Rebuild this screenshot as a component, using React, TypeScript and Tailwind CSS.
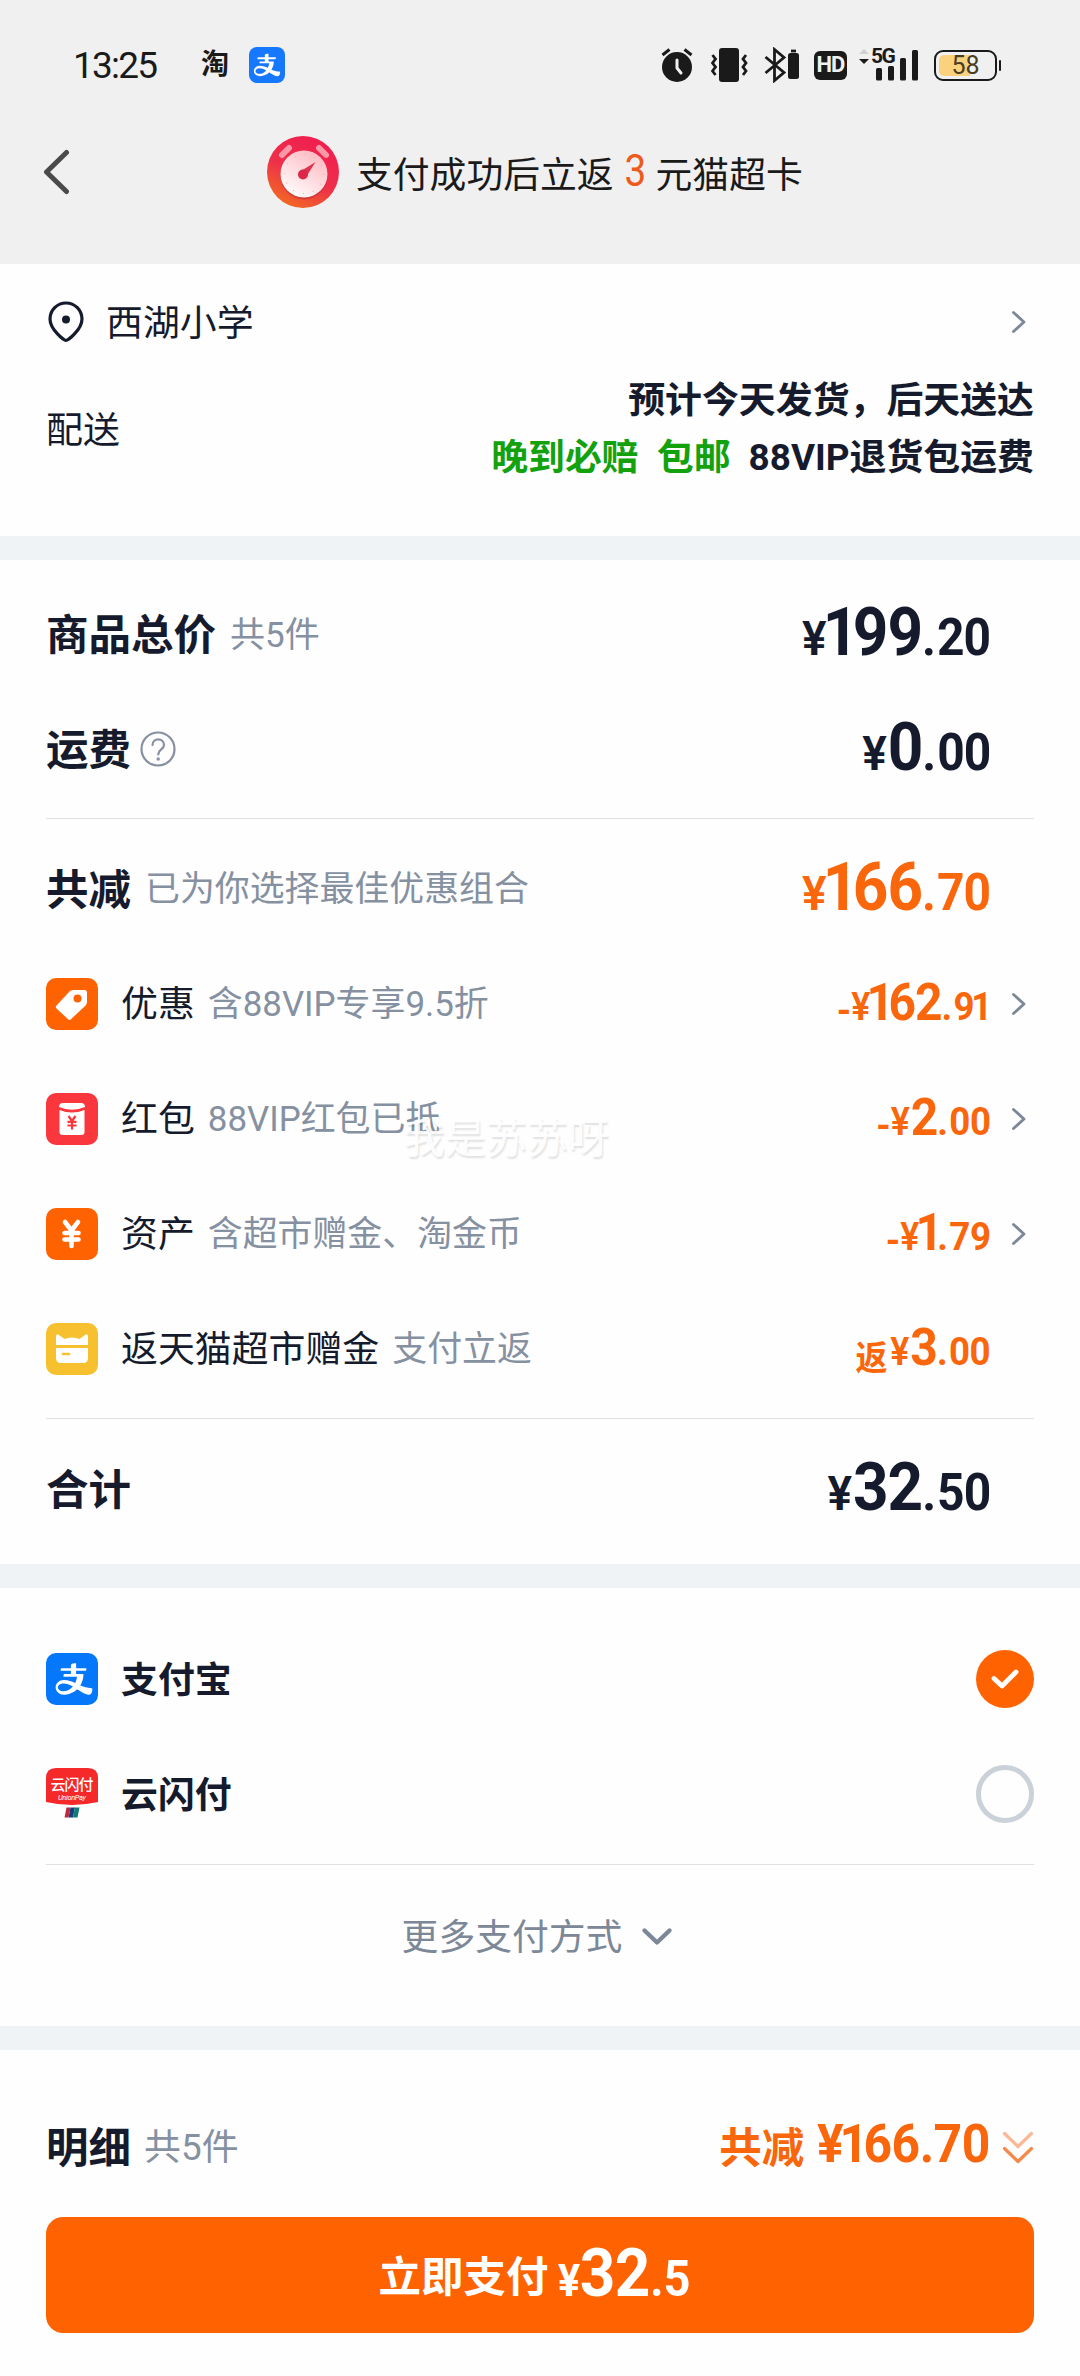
import type { ReactNode } from "react";
import clsx from "clsx";
import { AiOutlineAlipay } from "react-icons/ai";

type PriceProps = {
  prefix?: string;
  int: string;
  dec: string;
  size?: "lg" | "sm";
  className?: string;
};

// A leading "1" is set tighter than the other digits
function Digits({ value, tight }: { value: string; tight: string }) {
  if (!value.startsWith("1")) return <>{value}</>;
  return (
    <>
      <span className={tight}>1</span>
      {value.slice(1)}
    </>
  );
}

function Price({ prefix, int, dec, size = "lg", className }: PriceProps) {
  const lg = size === "lg";
  return (
    <span
      className={clsx(
        "flex origin-right scale-x-[0.94] items-baseline font-bold leading-none whitespace-nowrap",
        lg ? "pb-[2px]" : "pb-[3px]",
        className,
      )}
    >
      {prefix === "-" && <span className="relative top-[4px] mr-[2px] text-[39px] tracking-[-2px]">-</span>}
      {prefix && prefix !== "-" && (
        <span className="relative top-[5px] mr-[3px] text-[34px]">{prefix}</span>
      )}
      <span className={lg ? "mr-[4px] text-[49px] font-semibold tracking-[-3px]" : "mr-[3px] text-[38px] font-semibold tracking-[-2px]"}>¥</span>
      <span className={lg ? "text-[66px] tracking-[-1px]" : "text-[51px] tracking-[-1px]"}>
        <Digits value={int} tight={lg ? "-ml-[5px] tracking-[-6px]" : "-ml-[5px] tracking-[-6px]"} />
      </span>
      <span className={lg ? "text-[51px] tracking-[-1px]" : "text-[39px] tracking-[-0.5px]"}>
        <span className="mr-[2px]">.</span>
        {dec.endsWith("1") ? (
          <>
            {dec.slice(0, -1)}
            <span className="-ml-[3px] -mr-[2px]">1</span>
          </>
        ) : (
          dec
        )}
      </span>
    </span>
  );
}

function Chevron() {
  return (
    <svg className="w-[14px] h-[22px] shrink-0" viewBox="0 0 14 22" fill="none">
      <path d="M1.5 1.5 12 11 1.500 20.500" stroke="#7c8798" strokeWidth="2.8" strokeLinecap="round" strokeLinejoin="round" />
    </svg>
  );
}

function StatusBar() {
  return (
    <div className="flex h-[130px] items-center pl-[73px] text-[#1a1a1a]">
      <span className="w-[128px] pt-px text-[37px] leading-none tracking-[-1.8px]">13:25</span>
      <span className="w-[48px] text-[28px] font-bold leading-none">淘</span>
      <span className="flex h-9 w-9 items-center justify-center rounded-[8px] bg-[#1677ff]">
        <AiOutlineAlipay className="h-[30px] w-[30px] text-white" />
      </span>

      {/* Alarm */}
      <svg className="ml-[375px] h-[36px] w-[34px]" viewBox="0 0 34 36">
        <circle cx="17" cy="20" r="15" fill="currentColor" />
        <path d="m2.5 8 7-5.5M31.500 8l-7-5.500" stroke="currentColor" strokeWidth="3" />
        <path d="M17 13v8l4 5" fill="none" stroke="#f0f0f0" strokeWidth="3" strokeLinecap="round" strokeLinejoin="round" />
      </svg>
      {/* Vibrate */}
      <svg className="ml-[17px] h-[36px] w-[37px]" viewBox="0 0 37 36" fill="none" stroke="currentColor" strokeWidth="2.8">
        <rect x="8" y="1" width="20" height="34" rx="3" fill="currentColor" stroke="none" />
        <path d="m1.500 8 3 4-3 4 3 4-3 4 3 4M35 8l-3 4 3 4-3 4 3 4-3 4" />
      </svg>
      {/* Bluetooth with device battery */}
      <svg className="ml-[16px] h-[36px] w-[36px]" viewBox="0 0 36 36" fill="none" stroke="currentColor" strokeWidth="2.800">
        <path d="m1.500 10 18.500 15.500-9.500 8V2.500l9.500 8L1.500 26" />
        <rect x="24" y="6" width="11" height="26" rx="2.500" fill="currentColor" stroke="none" />
        <path d="M27 4h5" />
      </svg>
      <span className="ml-[14px] flex h-[29px] w-[33px] items-center justify-center rounded-[6px] bg-[#1a1a1a] text-[22px] font-bold leading-none tracking-[-1px] text-[#f0f0f0]">
        HD
      </span>
      {/* Signal */}
      <span className="relative ml-[11px] h-[36px] w-[61px]">
        <svg className="h-[36px] w-[61px]" viewBox="0 0 61 36" fill="currentColor">
          <path d="m1 7 5-5 5 5z" fill="#cfcfcf" />
          <path d="M1 12h10l-5 5z" />
          <rect x="18" y="21" width="6" height="12.500" rx="1.500" />
          <rect x="30" y="19" width="6" height="14.500" rx="1.500" />
          <rect x="42" y="11" width="6" height="22.500" rx="1.500" />
          <rect x="54" y="3" width="6" height="30.500" rx="1.500" />
        </svg>
        <span className="absolute left-[13px] top-[-3px] text-[21px] font-bold leading-[24px] tracking-[-1.5px]">5G</span>
      </span>
      {/* Battery */}
      <span className="relative ml-[15px] flex h-[31px] w-[63px] items-center justify-center rounded-[9px] border-2 border-[#1a1a1a]">
        <span className="absolute left-[3px] top-[3px] h-[21px] w-[31px] rounded-l-[5px] bg-[#fad27d]" />
        <span className="relative text-[25px] leading-none text-[#4a3d22]">58</span>
        <span className="absolute -right-[6px] top-[8px] h-[11px] w-[2.5px] rounded bg-[#1a1a1a]" />
      </span>
    </div>
  );
}

function TimerIcon() {
  return (
    <svg className="h-[72px] w-[72px]" viewBox="0 0 72 72">
      <defs>
        <linearGradient id="timer" x1="0.75" y1="0.1" x2="0.3" y2="1">
          <stop offset="0" stopColor="#f01f4e" />
          <stop offset="0.5" stopColor="#ee2f4a" />
          <stop offset="1" stopColor="#f26a22" />
        </linearGradient>
        <linearGradient id="dial" x1="0.8" y1="0.1" x2="0.2" y2="1">
          <stop offset="0" stopColor="#fdbcc4" />
          <stop offset="1" stopColor="#ffffff" />
        </linearGradient>
      </defs>
      <circle cx="36" cy="36" r="36" fill="url(#timer)" />
      <path d="m15 19 7-7M52 12l7 7" stroke="#fb97a6" strokeWidth="6" strokeLinecap="round" />
      <circle cx="37" cy="40" r="23.500" fill="#b52a32" opacity="0.5" />
      <circle cx="37" cy="38" r="23.500" fill="url(#dial)" />
      <circle cx="37" cy="38" r="19.500" fill="none" stroke="#eeb0a8" strokeWidth="1.200" strokeDasharray="1 9.210" />
      <path d="m34 35 14.500-9L39 41z" fill="#e2304d" />
      <circle cx="36" cy="38.500" r="5" fill="#dc2747" />
    </svg>
  );
}

function Header() {
  return (
    <header className="h-[264px] bg-[#f0f0f0]">
      <StatusBar />
      <div className="flex h-[84px] items-center pl-[43px]">
        <svg className="h-[46px] w-[27px]" viewBox="0 0 27 46" fill="none">
          <path d="M23.500 3.500 3.500 23l20 19.500" stroke="#4a4a4a" strokeWidth="5" strokeLinecap="round" strokeLinejoin="round" />
        </svg>
        <span className="ml-[197px]">
          <TimerIcon />
        </span>
        <p className="ml-[17px] flex items-baseline pt-[2px] text-[36.8px] leading-none text-[#1a1a1a]">
          支付成功后立返
          <span className="relative -top-[2px] mx-[9px] inline-block w-[24px] text-center text-[44px] leading-none text-[#ec5b1b]">
            <span className="inline-block scale-x-[0.88]">3</span>
          </span>
          元猫超卡
        </p>
      </div>
    </header>
  );
}

function TagIcon() {
  return (
    <svg viewBox="0 0 52 52" className="h-[52px] w-[52px]">
      <rect width="52" height="52" rx="10" fill="#ff6200" />
      <path d="M27 12h11.500q2.500 0 2.500 2.500V24q0 2-1.400 3.400L25 41.200q-1.500 1.500-3 0L10.500 30.500q-1.500-1.500 0-3L23.500 13.500Q25 12 27 12z" fill="#fff" />
      <circle cx="31.500" cy="20.500" r="4" fill="#ff6200" />
    </svg>
  );
}

function RedPacketIcon() {
  return (
    <svg viewBox="0 0 52 52" className="h-[52px] w-[52px]">
      <rect width="52" height="52" rx="10" fill="#fa373c" />
      <path d="M13 14q0-4 4-4h18q4 0 4 4-13 5.500-26 0z" fill="#fff" />
      <path d="M13.500 17q12.500 5 25 0v22q0 3-3 3h-19q-3 0-3-3z" fill="#fff" />
      <path d="m22.500 23 3.500 5 3.500-5M26 28v8.500M21.500 28.800h9M21.500 32.500h9" fill="none" stroke="#fa373c" strokeWidth="2.200" />
    </svg>
  );
}

function YuanIcon() {
  return (
    <svg viewBox="0 0 52 52" className="h-[52px] w-[52px]">
      <rect width="52" height="52" rx="10" fill="#ff6200" />
      <path d="m19 14 6.500 8.500L32 14M25.500 23v15M18.500 25h14M18.500 31.500h14" fill="none" stroke="#fff" strokeWidth="4.600" strokeLinecap="round" strokeLinejoin="round" />
    </svg>
  );
}

function CatCardIcon() {
  return (
    <svg viewBox="0 0 52 52" className="h-[52px] w-[52px]">
      <rect width="52" height="52" rx="10" fill="#f6c02f" />
      <path d="M10 22v-8q0-4 3-2l5.500 4q7.500-3 15 0l5.500-4q3-2 3 2v8z" fill="#fff" />
      <path d="M10 25h32v10q0 5-5 5H15q-5 0-5-5z" fill="#fff" />
      <path d="M17 31h6" stroke="#f6c02f" strokeWidth="2.600" strokeLinecap="round" />
    </svg>
  );
}

function UnionPayIcon() {
  return (
    <svg viewBox="0 0 52 52" className="h-[52px] w-[52px]">
      <path d="M0 10Q0 0 10 0h32q10 0 10 10v24Q26 40 0 34z" fill="#f5282a" />
      <text x="26" y="22" textAnchor="middle" fontSize="15" fontWeight="500" textLength="43" fill="#fff">云闪付</text>
      <text x="26" y="32" textAnchor="middle" fontSize="7.5" fontStyle="italic" textLength="28" fill="#fff">UnionPay</text>
      <path d="M20.500 39.500h4l-2 10h-4z" fill="#c2273a" />
      <path d="M24.500 39.500h4.500l-2 10h-4.500z" fill="#12407f" />
      <path d="M29 39.500h4.500l-2 10H27z" fill="#127a72" />
    </svg>
  );
}

function DiscountRow(props: {
  icon: ReactNode;
  label: string;
  note: string;
  prefix: string;
  int: string;
  dec: string;
  link?: boolean;
}) {
  return (
    <div className="flex h-[115px] items-center">
      {props.icon}
      <span className="ml-[23px] pt-[3px] text-[36.9px]">{props.label}</span>
      <span className="ml-[13px] pt-[3px] text-[34.9px] text-[#8590a1]">{props.note}</span>
      <Price prefix={props.prefix} int={props.int} dec={props.dec} size="sm" className="ml-auto text-[#f9660b]" />
      <span className="ml-[22px] w-[22px]">{props.link && <Chevron />}</span>
    </div>
  );
}

const DISCOUNTS = [
  { icon: <TagIcon />,       label: "优惠",           note: "含88VIP专享9.5折",     prefix: "-",  int: "162", dec: "91", link: true },
  { icon: <RedPacketIcon />, label: "红包",           note: "88VIP红包已抵",        prefix: "-",  int: "2",   dec: "00", link: true },
  { icon: <YuanIcon />,      label: "资产",           note: "含超市赠金、淘金币",   prefix: "-",  int: "1",   dec: "79", link: true },
  { icon: <CatCardIcon />,   label: "返天猫超市赠金", note: "支付立返",             prefix: "返", int: "3",   dec: "00" },
];

function SummaryRow({ title, children, int, dec, orange }: {
  title: string;
  children?: ReactNode;
  int: string;
  dec: string;
  orange?: boolean;
}) {
  return (
    <div className="flex h-[115px] items-center pr-[44px]">
      <span className="pt-[5px] text-[42.5px] font-bold">{title}</span>
      {children}
      <Price int={int} dec={dec} className={clsx("ml-auto", orange && "text-[#f9660b]")} />
    </div>
  );
}

function Gap() {
  return <div className="h-6 bg-[#eff3f6]" />;
}

export default function App() {
  return (
    <div className="min-h-[2376px] w-[1080px] bg-[#fefefe] font-[Roboto,'Noto_Sans_CJK_SC',sans-serif] leading-none text-[#151b2c]">
      <Header />

      {/* Address and delivery */}
      <section className="h-[272px] px-[46px]">
        <div className="flex h-[115px] items-center">
          <svg className="h-[42px] w-[40px]" viewBox="0 0 40 42" fill="none">
            <path d="M20 39.500c-2 0-16-11-16-21.500a16 16 0 0 1 32 0c0 10.500-14 21.500-16 21.500z" stroke="currentColor" strokeWidth="3.200" />
            <circle cx="20" cy="18.500" r="4" fill="currentColor" />
          </svg>
          <span className="ml-[20px] pt-[5px] text-[36.9px]">西湖小学</span>
          <span className="ml-auto mr-[8px]">
            <Chevron />
          </span>
        </div>
        <div className="flex items-center justify-between">
          <span className="pt-[4px] text-[36.9px]">配送</span>
          <div className="flex h-[100px] flex-col justify-between pt-px text-right text-[36.9px] font-bold">
            <p className="leading-[42px]">预计今天发货，后天送达</p>
            <p className="flex justify-end leading-[42px]">
              <span className="mr-[18px] text-[#13a10e]">晚到必赔</span>
              <span className="mr-[18px] text-[#13a10e]">包邮</span>
              <span>88VIP退货包运费</span>
            </p>
          </div>
        </div>
      </section>

      <Gap />

      {/* Price breakdown */}
      <section className="relative h-[1004px] px-[46px] pt-[16px]">
        <SummaryRow title="商品总价" int="199" dec="20">
          <span className="ml-[14px] pt-[3px] text-[35px] text-[#8590a1]">共5件</span>
        </SummaryRow>
        <SummaryRow title="运费" int="0" dec="00">
          <svg className="ml-[9px] h-[36px] w-[36px]" viewBox="0 0 36 36" fill="none" stroke="#8590a1" strokeWidth="2.200">
            <circle cx="18" cy="18" r="16.500" />
            <path d="M12.500 14c0-7.500 11.500-7.500 11.500 0 0 4.500-5.800 4.500-5.800 9.500" strokeLinecap="round" />
            <circle cx="18.200" cy="28" r="1.700" fill="#8590a1" stroke="none" />
          </svg>
        </SummaryRow>
        <div className="my-[12px] h-px bg-[#dfe1e4]" />
        <SummaryRow title="共减" int="166" dec="70" orange>
          <span className="ml-[14px] pt-[3px] text-[34.9px] text-[#8590a1]">已为你选择最佳优惠组合</span>
        </SummaryRow>
        {DISCOUNTS.map((d) => (
          <DiscountRow key={d.label} {...d} />
        ))}
        <div className="my-[12px] h-px bg-[#dfe1e4]" />
        <SummaryRow title="合计" int="32" dec="50" />

        {/* Watermark */}
        <span className="absolute left-[404px] top-[559px] text-[41px] text-white/90 [text-shadow:1px_2px_2px_rgba(0,0,0,0.12)]">
          我是苏苏呀
        </span>
      </section>

      <Gap />

      {/* Payment methods */}
      <section className="h-[438px] px-[46px] pt-[33px]">
        <div className="flex h-[115px] items-center">
          <span className="flex h-[52px] w-[52px] items-center justify-center rounded-[10px] bg-[#0577fb]">
            <AiOutlineAlipay className="ml-[4px] h-[42px] w-[42px] text-white" />
          </span>
          <span className="ml-[23px] pt-[5px] text-[36.9px] font-bold">支付宝</span>
          <span className="ml-auto flex h-[58px] w-[58px] items-center justify-center rounded-full bg-[#ff6200]">
            <svg className="h-[20px] w-[28px]" viewBox="0 0 28 20" fill="none">
              <path d="m3 9.500 8 7.500L25 3" stroke="#fff" strokeWidth="4.800" strokeLinecap="round" strokeLinejoin="round" />
            </svg>
          </span>
        </div>
        <div className="flex h-[115px] items-center">
          <UnionPayIcon />
          <span className="ml-[23px] pt-[5px] text-[36.9px] font-bold">云闪付</span>
          <span className="ml-auto h-[58px] w-[58px] rounded-full border-[5px] border-[#cbd1d8]" />
        </div>
        <div className="mt-[13px] h-px bg-[#dfe1e4]" />
        <div className="flex h-[143px] items-center justify-center pr-[5px] text-[#7c8798]">
          <span className="pt-[3px] text-[36.8px]">更多支付方式</span>
          <svg className="ml-[19px] h-[20px] w-[32px]" viewBox="0 0 32 20" fill="none">
            <path d="m3.500 3.500 12.500 12 12.500-12" stroke="currentColor" strokeWidth="4.400" strokeLinecap="round" strokeLinejoin="round" />
          </svg>
        </div>
      </section>

      <Gap />

      {/* Checkout bar */}
      <footer className="px-[46px] pt-[40px]">
        <div className="flex h-[115px] items-center">
          <span className="pt-[3px] text-[42.5px] font-bold">明细</span>
          <span className="ml-[13px] pt-px text-[36.9px] text-[#8590a1]">共5件</span>
          <span className="ml-auto pt-[3px] text-[42.5px] font-bold text-[#f9660b]">共减</span>
          <span className="ml-[2px] origin-right scale-x-[0.94] pb-[7px] text-[53px] font-bold tracking-[-0.5px] text-[#f9660b]">
            ¥<Digits value="166.70" tight="-ml-[4px] tracking-[-5px]" />
          </span>
          <svg className="ml-[12px] h-[36px] w-[32px]" viewBox="0 0 32 36" fill="none" strokeWidth="3.200" strokeLinecap="round" strokeLinejoin="round">
            <path d="m2.500 3.500 13.500 13 13.500-13" stroke="#fbb896" />
            <path d="m2.500 18.500 13.500 13 13.500-13" stroke="#f5894a" />
          </svg>
        </div>
        <button className="mt-[12px] flex h-[116px] w-full items-center justify-center rounded-[17px] bg-[#ff6200] pr-[13px] font-bold text-white">
          <span className="pt-[7px] text-[42.5px]">立即支付</span>
          <span className="ml-[9px] flex w-[131px] origin-left scale-x-[0.94] items-baseline pb-[3px] leading-none">
            <span className="text-[44px] tracking-[-0.5px]">¥</span>
            <span className="text-[66px] tracking-[-0.5px]">32</span>
            <span className="text-[50px]">.5</span>
          </span>
        </button>
      </footer>
    </div>
  );
}
